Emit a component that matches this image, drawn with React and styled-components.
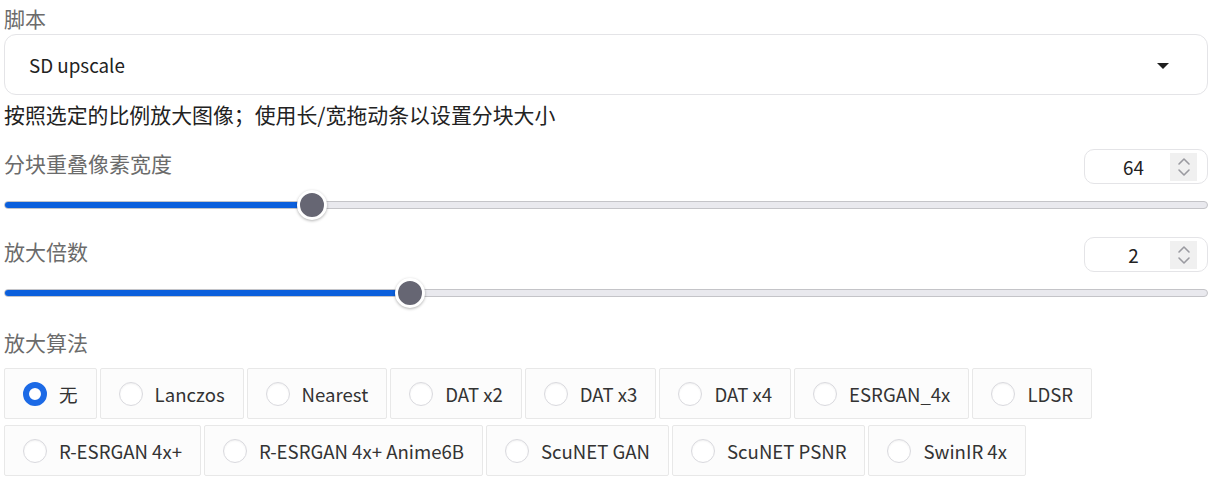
import styled, { createGlobalStyle } from "styled-components";

const GlobalStyle = createGlobalStyle`
  html, body {
    margin: 0;
    padding: 0;
    background: #fff;
  }
  body {
    font-family: "Noto Sans CJK SC", "Noto Sans", sans-serif;
    color: #222;
  }
`;

const Page = styled.div`
  width: 1209px;
  box-sizing: border-box;
  padding: 6px 1px 0 4px;
  display: flex;
  flex-direction: column;
`;

const Label = styled.div`
  font-size: 21px;
  line-height: 24px;
  color: #6b6b6b;
`;

const Dropdown = styled.div`
  margin-top: 4px;
  height: 61px;
  box-sizing: border-box;
  border: 1px solid #e4e4e7;
  border-radius: 12px;
  display: flex;
  align-items: center;
  justify-content: space-between;
  padding: 0 38px 0 24px;
  font-size: 18.8px;
  color: #222;
`;

const Caret = styled.span`
  width: 0;
  height: 0;
  border-left: 6px solid transparent;
  border-right: 6px solid transparent;
  border-top: 6px solid #1f1f1f;
  margin-top: 2px;
`;

const Description = styled.div`
  margin-top: 7px;
  font-size: 20.9px;
  line-height: 24px;
  color: #222;
`;

const SliderBlock = styled.div`
  margin-top: ${(p) => p.$top}px;
  display: flex;
  flex-direction: column;
`;

const SliderHead = styled.div`
  display: flex;
  justify-content: space-between;
  align-items: flex-start;
  height: 35px;
`;

const SliderLabel = styled(Label)`
  line-height: 28px;
`;

const NumberBox = styled.div`
  width: 124px;
  height: 35px;
  box-sizing: border-box;
  border: 1px solid #e4e4e7;
  border-radius: 10px;
  display: flex;
  align-items: center;
  padding: 0 10px 0 0;
`;

const NumberValue = styled.span`
  flex: 1;
  text-align: center;
  font-size: 18.8px;
  color: #222;
  padding-left: 12px;
`;

const Spinner = styled.div`
  width: 27px;
  height: 28px;
  background: #f0f0f0;
  display: flex;
  align-items: center;
  justify-content: center;
`;

const Track = styled.div`
  position: relative;
  margin-top: 6px;
  height: 30px;
  display: flex;
  align-items: center;
`;

const Rail = styled.div`
  flex: 1;
  height: 8px;
  box-sizing: border-box;
  border-radius: 4px;
  background: #e9e9ee;
  border: 1px solid #c4c4c8;
  position: relative;
  overflow: hidden;
`;

const Fill = styled.div`
  position: absolute;
  left: -1px;
  top: -1px;
  bottom: -1px;
  background: #0b5fdc;
  border-radius: 4px 0 0 4px;
`;

const Thumb = styled.div`
  position: absolute;
  top: 0;
  width: 30px;
  height: 30px;
  box-sizing: border-box;
  margin-left: -15px;
  border-radius: 50%;
  background: #666673;
  border: 3px solid #fff;
  box-shadow: 0 1px 3px rgba(0, 0, 0, 0.3);
`;

const AlgoLabel = styled(Label)`
  margin-top: 20px;
  line-height: 28px;
`;

const Options = styled.div`
  margin-top: 12px;
  display: flex;
  flex-wrap: wrap;
  column-gap: 3px;
  row-gap: 6px;
`;

const Option = styled.label`
  height: 51px;
  box-sizing: border-box;
  display: flex;
  align-items: center;
  gap: 12px;
  padding: 0 18px;
  background: #fcfcfc;
  border: 1px solid #e8e8e8;
  border-radius: 2px;
  font-size: 18.6px;
  color: #333;
`;

const Dot = styled.span`
  width: 24px;
  height: 24px;
  flex-shrink: 0;
  box-sizing: border-box;
  border-radius: 50%;
  background: #fff;
  border: ${(p) => (p.$on ? "6.5px solid #1c6ae6" : "1px solid #d9d9de")};
  box-shadow: ${(p) => (p.$on ? "none" : "inset 0 1px 2px rgba(0,0,0,0.06)")};
`;

function Chevrons() {
  return (
    <svg width="14" height="22" viewBox="0 0 14 22" fill="none" stroke="#9a9aa0" strokeWidth="1.6" strokeLinecap="round" strokeLinejoin="round">
      <path d="M2 8 L7 3 L12 8" />
      <path d="M2 14 L7 19 L12 14" />
    </svg>
  );
}

function Slider({ label, value, pct, top }) {
  return (
    <SliderBlock $top={top}>
      <SliderHead>
        <SliderLabel>{label}</SliderLabel>
        <NumberBox>
          <NumberValue>{value}</NumberValue>
          <Spinner>
            <Chevrons />
          </Spinner>
        </NumberBox>
      </SliderHead>
      <Track>
        <Rail>
          <Fill style={{ width: `${pct}%` }} />
        </Rail>
        <Thumb style={{ left: `${pct}%` }} />
      </Track>
    </SliderBlock>
  );
}

const upscalers = [
  "无",
  "Lanczos",
  "Nearest",
  "DAT x2",
  "DAT x3",
  "DAT x4",
  "ESRGAN_4x",
  "LDSR",
  "R-ESRGAN 4x+",
  "R-ESRGAN 4x+ Anime6B",
  "ScuNET GAN",
  "ScuNET PSNR",
  "SwinIR 4x",
];

export default function App() {
  return (
    <>
      <GlobalStyle />
      <Page>
        <Label>脚本</Label>
        <Dropdown>
          <span>SD upscale</span>
          <Caret />
        </Dropdown>
        <Description>按照选定的比例放大图像；使用长/宽拖动条以设置分块大小</Description>
        <Slider label="分块重叠像素宽度" value="64" pct={25.6} top={23} />
        <Slider label="放大倍数" value="2" pct={33.7} top={17} />
        <AlgoLabel>放大算法</AlgoLabel>
        <Options>
          {upscalers.map((name, i) => (
            <Option key={name}>
              <Dot $on={i === 0} />
              {name}
            </Option>
          ))}
        </Options>
      </Page>
    </>
  );
}
